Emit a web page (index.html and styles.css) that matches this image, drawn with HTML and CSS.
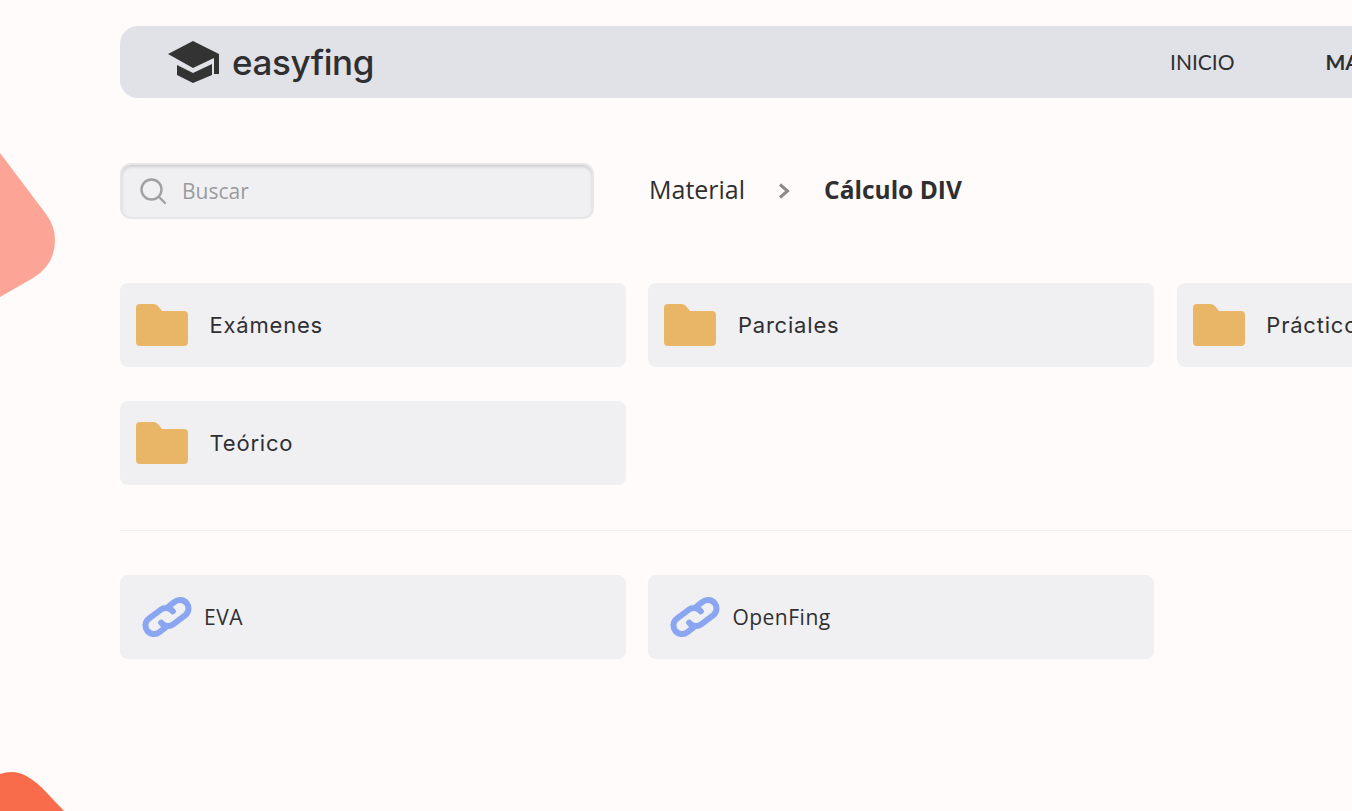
FILE: index.html
```html
<!DOCTYPE html>
<html lang="es">
<head>
<meta charset="utf-8">
<title>easyfing</title>
<link rel="stylesheet" href="styles.css">
</head>
<body>
<svg class="blob blob-top" width="56" height="146" viewBox="0 0 56 146" aria-hidden="true"><path d="M0 0L46 61Q55 73 55 87Q55 112 33 125L0 144Z"/></svg>
<svg class="blob blob-bottom" width="66" height="40" viewBox="0 0 66 40" aria-hidden="true"><path d="M0 3Q15 -2 28 6Q38 12 46 21L64 40L0 40Z"/></svg>
<div class="page">
  <header class="navbar">
    <a class="brand">
      <svg class="brand-icon" width="52" height="43" viewBox="0 0 52 43" aria-hidden="true"><path d="M25 0L51 13V33H46V17L25 27L0 13Z"/><path d="M9 24L25 32L44 23V34L25 42L9 34Z"/></svg>
      <span class="brand-name">easyfing</span>
    </a>
    <nav class="nav-links">
      <a class="nav-link">INICIO</a>
      <a class="nav-link nav-link-active">MATERIAL</a>
    </nav>
  </header>

  <section class="toolbar">
    <div class="search">
      <svg width="28" height="28" viewBox="0 0 28 28" fill="none" aria-hidden="true"><circle cx="12.500" cy="12.500" r="10" stroke="#a0a1a3" stroke-width="2.400"/><path d="M20 20L26 26" stroke="#a0a1a3" stroke-width="2.400" stroke-linecap="round"/></svg>
      <span class="search-text">Buscar</span>
    </div>
    <div class="crumbs">
      <span class="crumb">Material</span>
      <svg class="crumb-sep" width="12" height="16" viewBox="0 0 12 16" fill="none" aria-hidden="true"><path d="M2 1.500L9.500 8L2 14.500" stroke="#8a8a8a" stroke-width="3"/></svg>
      <span class="crumb crumb-current">Cálculo DIV</span>
    </div>
  </section>

  <section class="grid">
    <a class="card"><svg class="folder" width="52" height="42" viewBox="0 0 52 42" aria-hidden="true"><path d="M4 0H17Q20 0 22 2L26 7H48Q52 7 52 11V38Q52 42 48 42H4Q0 42 0 38V4Q0 0 4 0Z"/></svg><span class="card-label">Exámenes</span></a>
    <a class="card"><svg class="folder" width="52" height="42" viewBox="0 0 52 42" aria-hidden="true"><path d="M4 0H17Q20 0 22 2L26 7H48Q52 7 52 11V38Q52 42 48 42H4Q0 42 0 38V4Q0 0 4 0Z"/></svg><span class="card-label">Parciales</span></a>
    <a class="card"><svg class="folder" width="52" height="42" viewBox="0 0 52 42" aria-hidden="true"><path d="M4 0H17Q20 0 22 2L26 7H48Q52 7 52 11V38Q52 42 48 42H4Q0 42 0 38V4Q0 0 4 0Z"/></svg><span class="card-label">Prácticos</span></a>
    <a class="card"><svg class="folder" width="52" height="42" viewBox="0 0 52 42" aria-hidden="true"><path d="M4 0H17Q20 0 22 2L26 7H48Q52 7 52 11V38Q52 42 48 42H4Q0 42 0 38V4Q0 0 4 0Z"/></svg><span class="card-label">Teórico</span></a>
  </section>

  <hr class="divider">

  <section class="grid">
    <a class="card card-link"><svg class="link-icon" width="50" height="40" viewBox="0 0 50 40" fill="none" aria-hidden="true"><path d="M27 9.100L32.900 4.700A8.500 8.500 0 0 1 43.100 18.300L31.100 27.300A8.500 8.500 0 0 1 19.200 25.600"/><path d="M23 30.900L17.100 35.300A8.500 8.500 0 0 1 6.900 21.700L18.900 12.700A8.500 8.500 0 0 1 30.800 14.400"/></svg><span class="link-label">EVA</span></a>
    <a class="card card-link"><svg class="link-icon" width="50" height="40" viewBox="0 0 50 40" fill="none" aria-hidden="true"><path d="M27 9.100L32.900 4.700A8.500 8.500 0 0 1 43.100 18.300L31.100 27.300A8.500 8.500 0 0 1 19.200 25.600"/><path d="M23 30.900L17.100 35.300A8.500 8.500 0 0 1 6.900 21.700L18.900 12.700A8.500 8.500 0 0 1 30.800 14.400"/></svg><span class="link-label">OpenFing</span></a>
  </section>
</div>
</body>
</html>
```

FILE: styles.css
```css
html, body {
  margin: 0;
  height: 100%;
  overflow: hidden;
  background: #fffbfa;
  color: #2f2f31;
  font-family: "Open Sans", sans-serif;
}

.blob {
  position: absolute;
  left: 0;
}

.blob-top {
  top: 153px;
  fill: #fca596;
}

.blob-bottom {
  top: 771px;
  fill: #f96c4b;
}

.page {
  position: relative;
  width: 1563.2px;
  margin-left: 120px;
  padding-top: 26px;
}

.navbar {
  display: flex;
  align-items: center;
  height: 72px;
  padding-left: 48px;
  border-radius: 18px;
  background: #e0e2e8;
}

.brand {
  display: flex;
  align-items: center;
  gap: 12px;
  width: 214px;
}

.brand-icon {
  fill: #333334;
}

.brand-name {
  font-family: Inter, sans-serif;
  font-size: 35px;
  font-weight: 500;
  letter-spacing: -0.4px;
  color: #2f2f31;
}

.nav-links {
  display: flex;
  gap: 91px;
  margin-top: -2px;
  margin-left: 788px;
}

.nav-link {
  font-family: Lato, sans-serif;
  font-size: 21px;
  color: #2f2f31;
}

.nav-link-active {
  font-weight: 700;
}

.toolbar {
  display: flex;
  align-items: center;
  gap: 55px;
  margin-top: 65px;
}

.search {
  display: flex;
  align-items: center;
  gap: 15px;
  box-sizing: border-box;
  width: 474px;
  height: 56px;
  padding-left: 17px;
  border: 2px solid #e6e6e8;
  border-radius: 11px;
  background: #f0f0f3;
  box-shadow: inset 0 2px 3px rgba(0, 0, 0, 0.14);
}

.search-text {
  font-size: 21px;
  color: #9a9b9d;
}

.crumbs {
  display: flex;
  align-items: center;
  gap: 33px;
}

.crumb {
  margin-top: -4px;
  font-size: 25px;
}

.crumb-current {
  margin-left: 1px;
  font-size: 24.5px;
  font-weight: 700;
}

.grid {
  display: grid;
  grid-template-columns: repeat(3, 506px);
  column-gap: 22.4px;
  row-gap: 34px;
  margin-top: 64px;
}

.card {
  display: flex;
  align-items: center;
  gap: 21.5px;
  height: 84px;
  padding-left: 16px;
  border-radius: 8px;
  background: #f0f0f3;
}

.folder {
  fill: #e9b566;
}

.card-label {
  font-family: Inter, sans-serif;
  font-size: 22px;
  letter-spacing: 0.8px;
  color: #2f2f31;
}

.divider {
  height: 1px;
  margin: 45px 0 0;
  border: 0;
  background: #f2efed;
}

.divider + .grid {
  margin-top: 44px;
}

.card-link {
  gap: 12px;
  padding-left: 22px;
}

.link-icon path {
  stroke: #8aa6f0;
  stroke-width: 6;
  stroke-linecap: round;
}

.link-label {
  font-family: "Open Sans", sans-serif;
  font-size: 21px;
  letter-spacing: 0.5px;
  color: #2f2f31;
}
```
